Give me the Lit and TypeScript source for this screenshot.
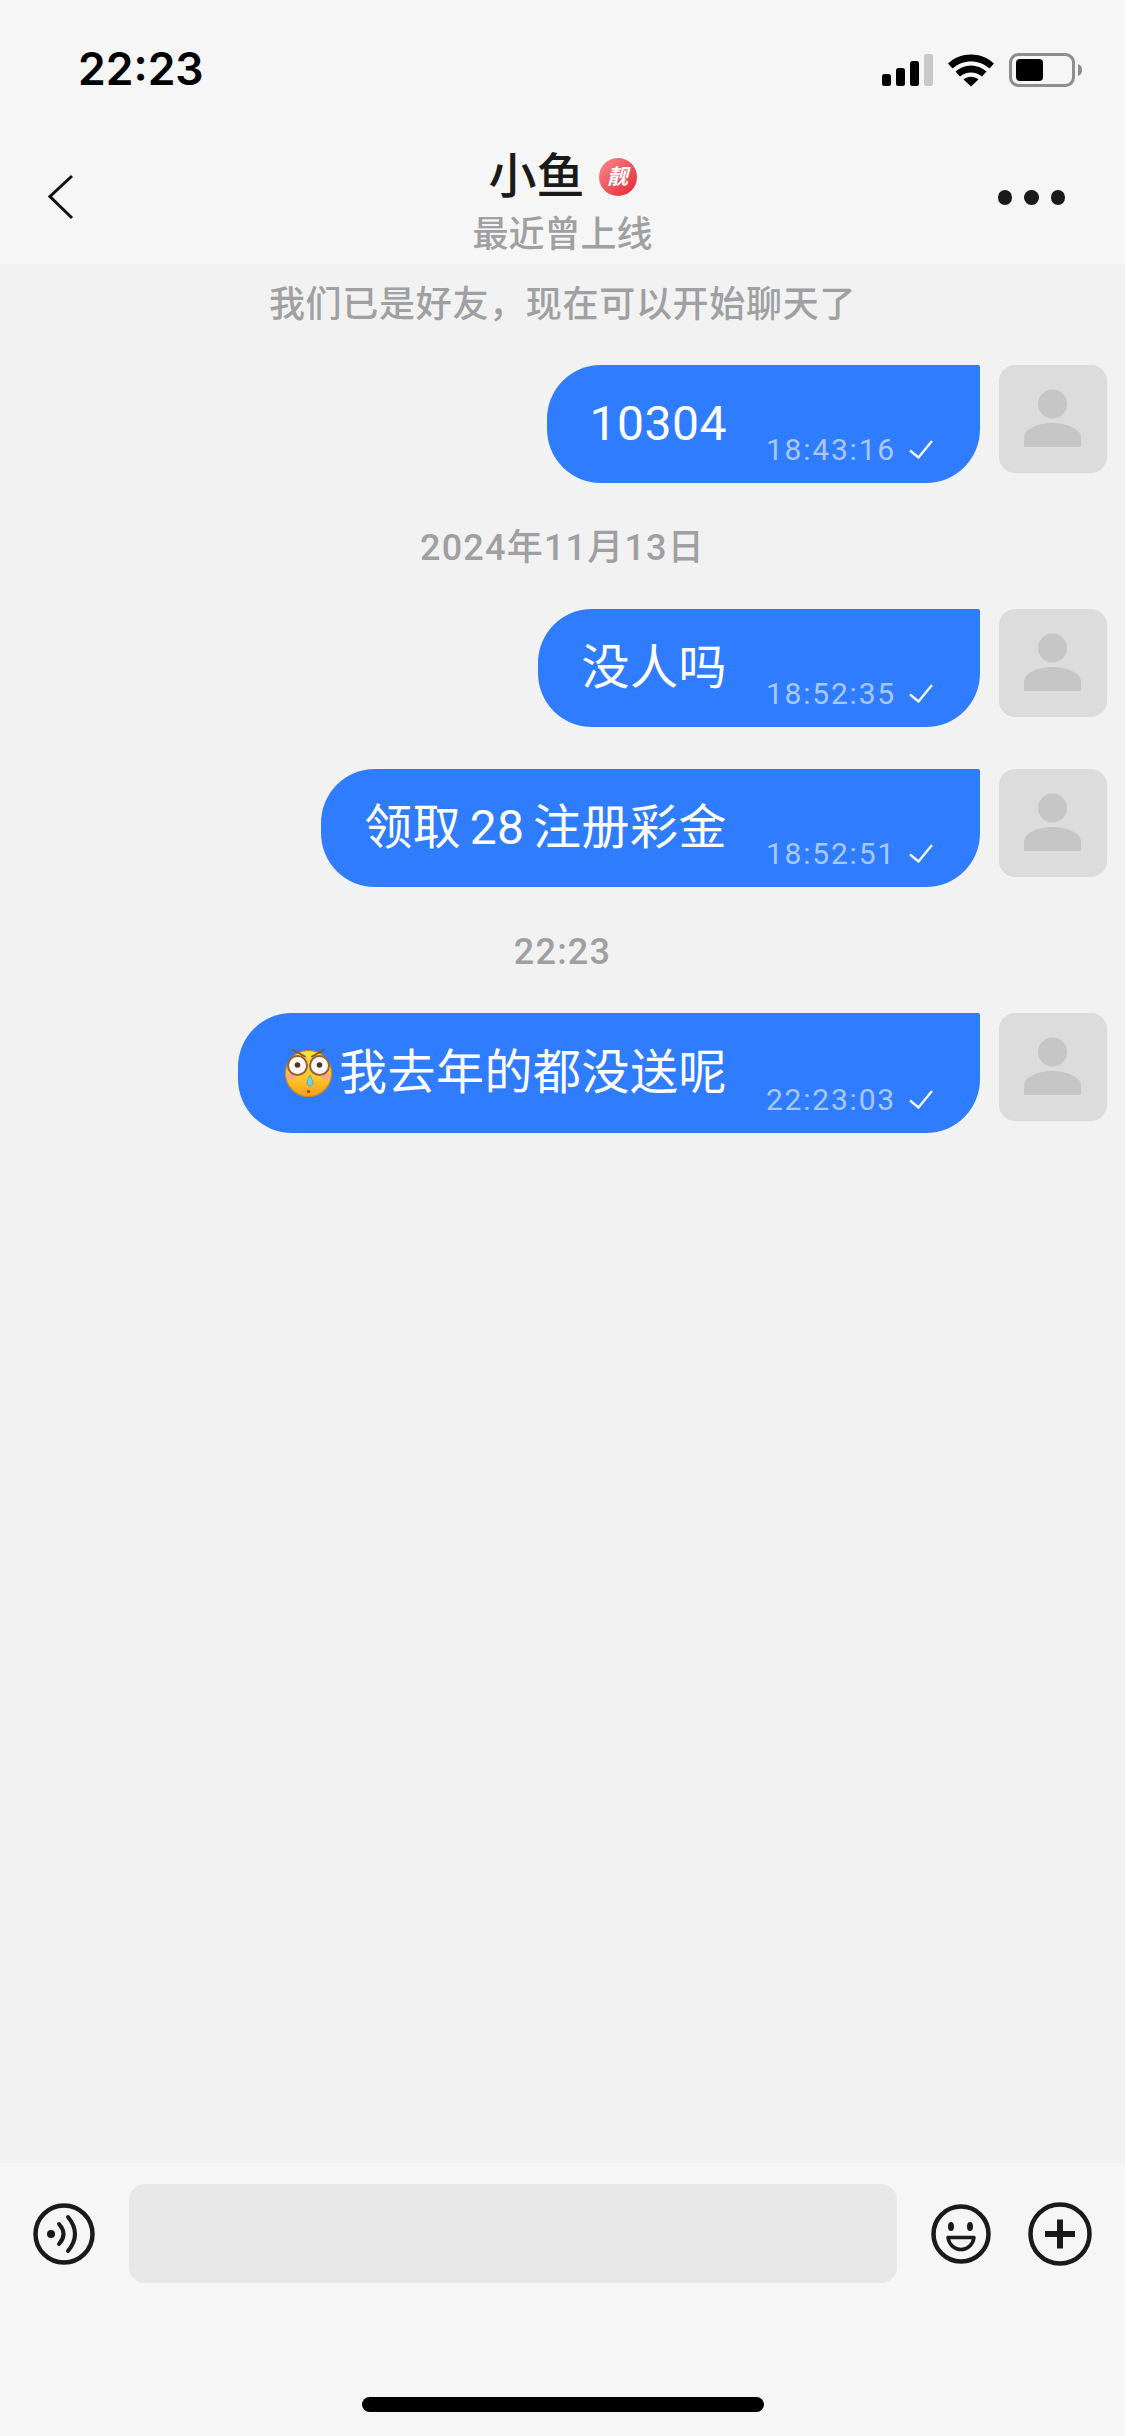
import { LitElement, html, css } from "lit";
import { customElement } from "lit/decorators.js";

type Msg = { kind: "msg"; text: string; time: string; emoji?: boolean } | { kind: "label"; text: string };

const ITEMS: Msg[] = [
  { kind: "msg", text: "10304", time: "18:43:16" },
  { kind: "label", text: "2024年11月13日" },
  { kind: "msg", text: "没人吗", time: "18:52:35" },
  { kind: "msg", text: "领取 28 注册彩金", time: "18:52:51" },
  { kind: "label", text: "22:23" },
  { kind: "msg", text: "我去年的都没送呢", time: "22:23:03", emoji: true },
];

const statusIcons = html`<svg class="status-icons" viewBox="0 0 200 34" width="200" height="34">
  <rect x="0" y="21" width="9" height="12" rx="2.500" fill="#000" />
  <rect x="14" y="15" width="9" height="18" rx="2.500" fill="#000" />
  <rect x="28" y="8" width="9" height="25" rx="2.500" fill="#000" />
  <rect x="42" y="1" width="9" height="32" rx="2.500" fill="#c8c8c8" />
  <path d="M66 10.500 C78.500 -1.500 99.500 -1.500 112 10.500 L107.500 15.500 C97.500 6 80.500 6 70.500 15.500 Z" fill="#000" />
  <path d="M73.500 18.500 C82.500 10.500 95.500 10.500 104.500 18.500 L100 23.500 C93.500 18 84.500 18 78 23.500 Z" fill="#000" />
  <path d="M81.500 26.500 C86 22.700 92 22.700 96.500 26.500 L89 33.500 Z" fill="#000" />
  <rect x="128.500" y="1.500" width="63" height="31" rx="8" fill="none" stroke="#8e8e8e" stroke-width="3" />
  <rect x="134" y="6" width="27" height="22" rx="4" fill="#000" />
  <path d="M196 11 C199 12 200 14 200 17 C200 20 199 22 196 23 Z" fill="#8e8e8e" />
</svg>`;

const person = html`<svg class="person" viewBox="0 0 108 108" width="108" height="108">
  <ellipse cx="53.500" cy="39" rx="14.500" ry="14.500" fill="#c6c6c6" />
  <path d="M25 82 V73 C25 64 39 58 53.500 58 C68 58 82 64 82 73 V81 Q82 82 81 82 Z" fill="#c6c6c6" />
</svg>`;

const check = html`<svg class="check" viewBox="0 0 24 19" width="24" height="19">
  <path d="M1 10.500 L9.500 17.500 L23 1" fill="none" stroke="#f2f6ff" stroke-width="2.400" />
</svg>`;

const emoji = html`<svg class="emoji" viewBox="0 0 48 50" width="48" height="50">
  <defs>
    <linearGradient id="face" x1="0" y1="0" x2="0" y2="1">
      <stop offset="0" stop-color="#ffe050" />
      <stop offset="0.6" stop-color="#fdc52a" />
      <stop offset="1" stop-color="#f0a018" />
    </linearGradient>
  </defs>
  <circle cx="23.500" cy="25.500" r="23" fill="url(#face)" stroke="#d98a14" stroke-width="1.200" />
  <ellipse cx="6.500" cy="28.500" rx="4.500" ry="3" fill="#f9a58d" />
  <ellipse cx="41" cy="28.500" rx="4.500" ry="3" fill="#f9a58d" />
  <circle cx="12.500" cy="17.500" r="9.500" fill="#fff" stroke="#99602a" stroke-width="2" />
  <circle cx="34.500" cy="17.500" r="9.500" fill="#fff" stroke="#99602a" stroke-width="2" />
  <circle cx="12.500" cy="17" r="2.800" fill="#5b3216" />
  <circle cx="34.500" cy="17" r="2.800" fill="#5b3216" />
  <path d="M8 2 L20 8.500 M39 2 L27 8.500" stroke="#8a5520" stroke-width="1.800" fill="none" stroke-linecap="round" />
  <path d="M25 27 C23 31 22 33 22 35 C22 39 28 39 28 35 C28 33 27 31 25 27 Z" fill="#6fd0e6" stroke="#3fa9c8" stroke-width="0.800" />
  <circle cx="23.500" cy="43.500" r="1.600" fill="#c8291a" />
</svg>`;

@customElement("app-root")
export class AppRoot extends LitElement {
  static styles = css`
    :host {
      display: block;
      width: 1125px;
      min-height: 2436px;
      background: #f2f2f2;
      font-family: Roboto, "Noto Sans CJK SC", sans-serif;
    }
    .page {
      display: flex;
      flex-direction: column;
      height: 2436px;
    }
    .top {
      background: #f6f6f6;
      height: 264px;
      flex: none;
    }
    .status {
      height: 140px;
      display: flex;
      justify-content: space-between;
      align-items: flex-start;
      padding: 52px 43px 0 78px;
      box-sizing: border-box;
    }
    .clock {
      font-family: Inter, sans-serif;
      font-weight: 600;
      font-size: 44.500px;
      line-height: 34px;
      color: #000;
    }
    .status-icons {
      display: block;
      margin-top: 1px;
    }
    .nav {
      display: grid;
      grid-template-columns: 1fr auto 1fr;
    }
    .side {
      height: 114px;
      display: flex;
      align-items: center;
    }
    .side.left {
      padding-left: 48px;
    }
    .side.right {
      justify-content: flex-end;
      padding-right: 60px;
      gap: 12px;
    }
    .dot {
      width: 14.500px;
      height: 15px;
      border-radius: 50%;
      background: #1a1a1a;
    }
    .title {
      padding-top: 9px;
      display: flex;
      flex-direction: column;
      align-items: center;
    }
    .name-row {
      display: flex;
      align-items: center;
      gap: 14px;
      height: 56px;
    }
    .name {
      font-size: 48px;
      line-height: 56px;
      font-weight: 500;
      color: #1a1a1a;
    }
    .badge {
      width: 38px;
      height: 38px;
      border-radius: 50%;
      background: linear-gradient(135deg, #fa8a8c 0%, #e8343f 85%);
      color: #fff;
      font-size: 21px;
      line-height: 38px;
      font-weight: 700;
      font-style: italic;
      text-align: center;
      margin-top: -1px;
    }
    .sub {
      margin-top: 8px;
      font-size: 36px;
      line-height: 44px;
      font-weight: 500;
      color: #a0a0a2;
    }
    .chat {
      flex: 1;
      padding-top: 20px;
      background: #f2f2f2;
      min-height: 0;
    }
    .sys {
      font-size: 36px;
      line-height: 42px;
      height: 42px;
      font-weight: 500;
      color: #a0a0a2;
      text-align: center;
      letter-spacing: 0.700px;
      margin-bottom: 39px;
    }
    .label {
      font-size: 36px;
      line-height: 42px;
      height: 42px;
      font-weight: 500;
      color: #a0a0a2;
      text-align: center;
      letter-spacing: 1.200px;
      margin: 44px 0 40px;
    }
    .row {
      display: flex;
      justify-content: flex-end;
      align-items: flex-start;
      gap: 19px;
      padding-right: 18px;
    }
    .row + .row {
      margin-top: 42px;
    }
    .avatar {
      width: 108px;
      height: 108px;
      border-radius: 16px;
      background: #dcdcdc;
      flex: none;
    }
    .person {
      display: block;
    }
    .bubble {
      display: flex;
      align-items: center;
      height: 118px;
      box-sizing: border-box;
      padding: 0 47px 0 43px;
      background: #307cff;
      border-radius: 54px 2px 54px 54px;
      color: #fff;
    }
    .bubble.tall {
      height: 120px;
    }
    .text {
      display: flex;
      align-items: center;
      font-size: 48px;
      line-height: 56px;
      letter-spacing: 0.500px;
      white-space: pre;
      word-spacing: -4px;
    }
    .emoji {
      display: block;
      margin: 0 6px 0 4px;
      flex: none;
    }
    .meta {
      width: 206px;
      align-self: flex-end;
      margin-bottom: 18px;
      display: flex;
      justify-content: flex-end;
      align-items: center;
      gap: 13px;
      font-size: 30px;
      line-height: 30px;
      letter-spacing: 1.800px;
      color: #a9c7ff;
    }
    .check {
      display: block;
      margin-top: -2px;
    }
    .bottom {
      flex: none;
      height: 273px;
      background: #f6f6f6;
      box-sizing: border-box;
      padding: 21px 33px 0;
      display: flex;
      flex-direction: column;
    }
    .bar {
      display: flex;
      align-items: center;
      height: 99px;
    }
    .bar svg {
      display: block;
      flex: none;
    }
    .input {
      flex: 1;
      height: 99px;
      margin: 0 34px;
      background: #e8e8e8;
      border-radius: 16px;
    }
    .smile {
      margin-right: 37px;
    }
    .home {
      align-self: center;
      width: 402px;
      height: 15px;
      border-radius: 8px;
      background: #000;
      margin-top: 114px;
    }
  `;

  private renderItem(item: Msg) {
    if (item.kind === "label") return html`<div class="label">${item.text}</div>`;
    return html`<div class="row">
      <div class="bubble ${item.emoji ? "tall" : ""}">
        <div class="text">${item.emoji ? emoji : ""}<span>${item.text}</span></div>
        <div class="meta"><span>${item.time}</span>${check}</div>
      </div>
      <div class="avatar">${person}</div>
    </div>`;
  }

  render() {
    return html`<div class="page">
      <div class="top">
        <div class="status">
          <div class="clock">22:23</div>
          ${statusIcons}
        </div>
        <div class="nav">
          <div class="side left">
            <svg viewBox="0 0 26 46" width="26" height="46">
              <path d="M24 2 L2 22.500 L24 44" fill="none" stroke="#111" stroke-width="3" />
            </svg>
          </div>
          <div class="title">
            <div class="name-row">
              <span class="name">小鱼</span>
              <span class="badge">靓</span>
            </div>
            <div class="sub">最近曾上线</div>
          </div>
          <div class="side right">
            <span class="dot"></span><span class="dot"></span><span class="dot"></span>
          </div>
        </div>
      </div>
      <div class="chat">
        <div class="sys">我们已是好友，现在可以开始聊天了</div>
        ${ITEMS.map((i) => this.renderItem(i))}
      </div>
      <div class="bottom">
        <div class="bar">
          <svg viewBox="0 0 62 62" width="62" height="62">
            <circle cx="31" cy="31" r="28.500" fill="none" stroke="#1a1a1a" stroke-width="4.500" />
            <circle cx="18" cy="31" r="4" fill="#1a1a1a" />
            <path d="M26 21 Q35 31 26 41" fill="none" stroke="#1a1a1a" stroke-width="4" stroke-linecap="round" />
            <path d="M35 14 Q49 31 35 48" fill="none" stroke="#1a1a1a" stroke-width="4" stroke-linecap="round" />
          </svg>
          <div class="input"></div>
          <svg class="smile" viewBox="0 0 60 62" width="60" height="62">
            <circle cx="30" cy="31" r="27.500" fill="none" stroke="#1a1a1a" stroke-width="4.500" />
            <ellipse cx="20" cy="23.500" rx="3" ry="4.500" fill="#1a1a1a" />
            <ellipse cx="39" cy="23.500" rx="3" ry="4.500" fill="#1a1a1a" />
            <path d="M17 34.500 H43 C42 42 36 46.500 30 46.500 C24 46.500 18 42 17 34.500 Z" fill="none" stroke="#1a1a1a" stroke-width="3.500" stroke-linejoin="round" />
          </svg>
          <svg viewBox="0 0 64 64" width="64" height="64">
            <circle cx="32" cy="32" r="29.500" fill="none" stroke="#1a1a1a" stroke-width="4.500" />
            <rect x="17" y="29" width="30" height="6" fill="#1a1a1a" />
            <rect x="29" y="17.500" width="6" height="29" fill="#1a1a1a" />
          </svg>
        </div>
        <div class="home"></div>
      </div>
    </div>`;
  }
}
